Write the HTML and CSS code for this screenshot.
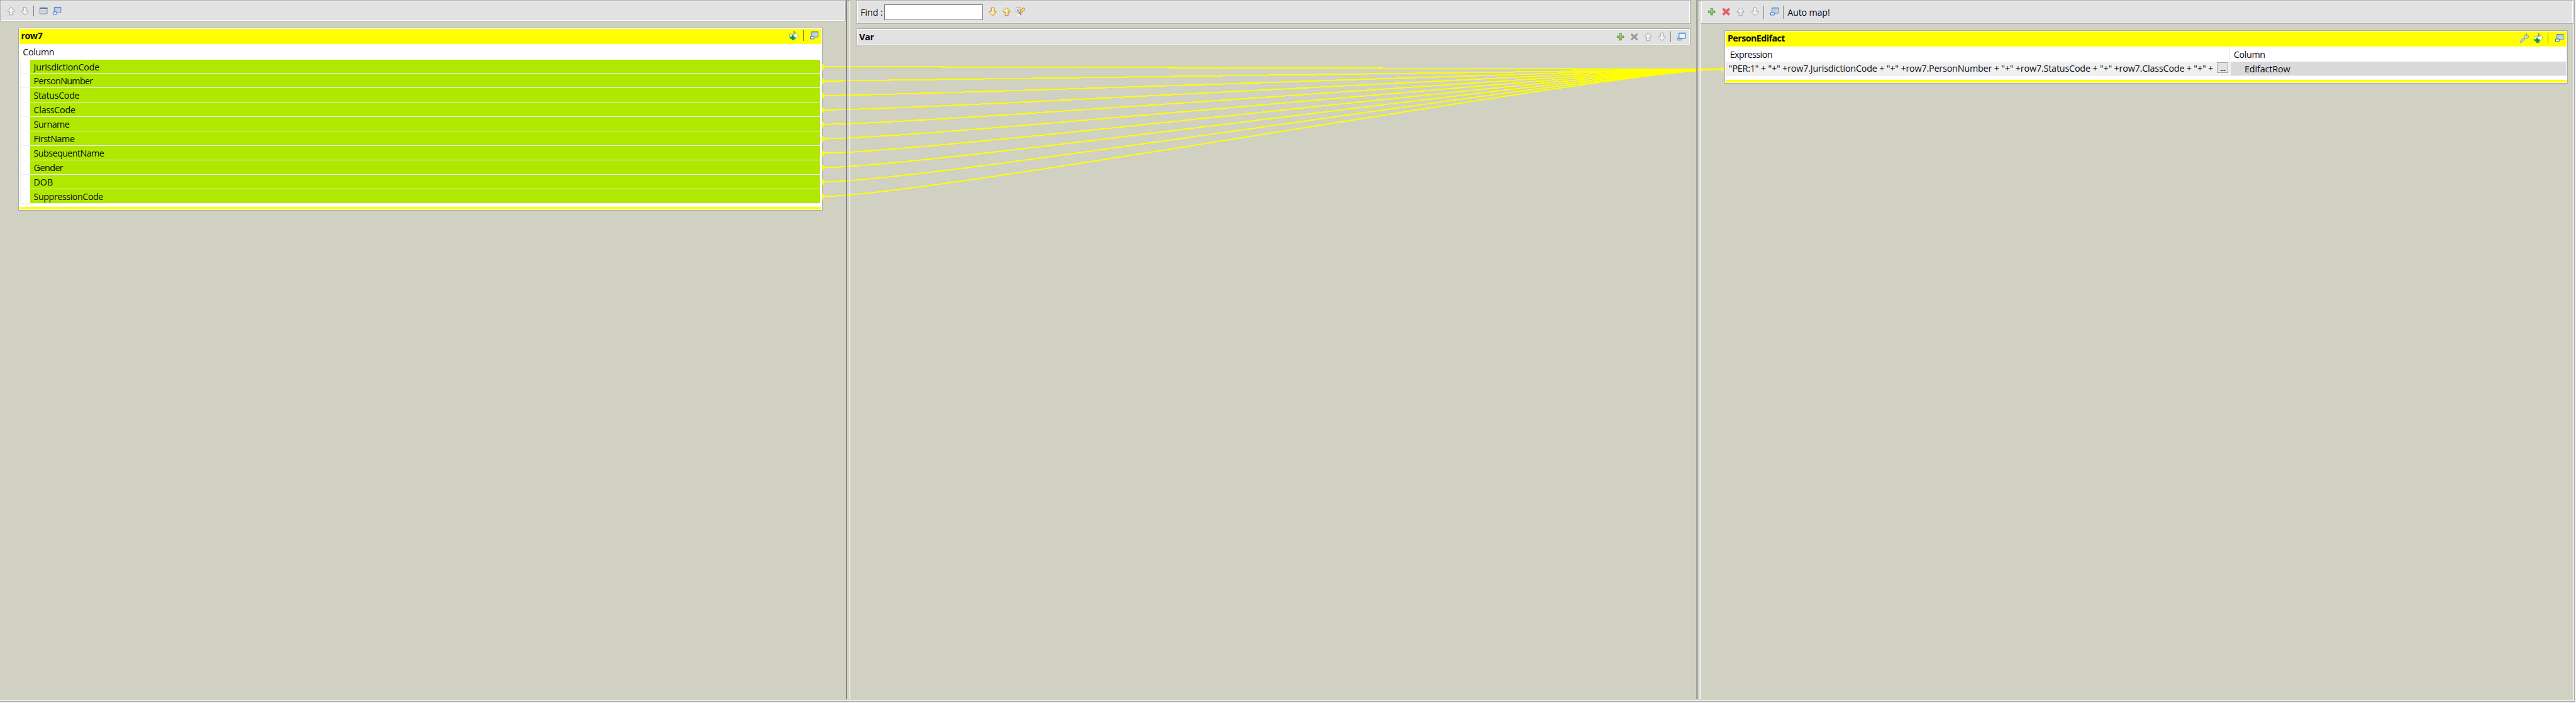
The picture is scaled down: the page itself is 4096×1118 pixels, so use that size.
FILE: index.html
```
<!DOCTYPE html>
<html lang="en">
<head>
<meta charset="utf-8">
<title>Map editor</title>
<link rel="stylesheet" href="styles.css">
</head>
<body>
<svg width="0" height="0" class="defs" aria-hidden="true">
  <defs>
    <linearGradient id="gold" x1="0" x2="1"><stop offset="0" stop-color="#fffbe0"/><stop offset="1" stop-color="#fbd97c"/></linearGradient>
    <linearGradient id="pane" x1="0" y1="0" x2="1" y2="1"><stop offset="0" stop-color="#b4c3d4"/><stop offset="1" stop-color="#d6dbdf"/></linearGradient>
    <linearGradient id="leaf" x1="0" y1="0" x2="0" y2="1"><stop offset="0" stop-color="#c3e06a"/><stop offset="1" stop-color="#7fb83c"/></linearGradient>
    <symbol id="up" viewBox="0 0 16 16"><path d="M8 1.500 13.500 7v1.500h-3v6h-5v-6h-3V7z"/></symbol>
    <symbol id="down" viewBox="0 0 16 16"><path d="M8 14.500 13.500 9V7.500h-3v-6h-5v6h-3V9z"/></symbol>
    <symbol id="table" viewBox="0 0 16 16"><path d="M1.500 2.500h12v10h-12z" fill="#fff" stroke="#66758f"/><path d="M1 2h13v2.500H1z" fill="#5d6f92"/><path d="M2 6.500h11M2 8.500h11M2 10.500h11" stroke="#a9b3c4"/><path d="M5.500 5v7" stroke="#c5ccd8"/></symbol>
    <symbol id="win" viewBox="0 0 16 16"><path d="M3.500 1.500h11v9h-11z" fill="url(#pane)" stroke="#4a86cc"/><path d="M4 2h10" stroke="#4a86cc"/><path d="M1.500 9.500h6v4h-6z" fill="#fff" stroke="#0a64d2"/></symbol>
    <symbol id="restore" viewBox="0 0 16 16"><path d="M1.500 9.500h6v4h-6z" fill="#b9c2cc" stroke="#8793a1"/><path d="M4 1.500h10.500v9H4z" fill="#e4f4ff" stroke="#0a5fc4"/><path d="M4 2h10" stroke="#0a5fc4"/></symbol>
    <symbol id="plus" viewBox="0 0 16 16"><path d="M6.500 2.500h3v4h4v3h-4v4h-3v-4h-4v-3h4z" fill="url(#leaf)" stroke="#3f8f4d"/></symbol>
    <symbol id="cross" viewBox="0 0 16 16"><path d="M4 2 8 5.700 12 2l2.200 2.200L10.600 8l3.600 3.800L12 14 8 10.300 4 14l-2.200-2.200L5.400 8 1.800 4.200z"/></symbol>
    <symbol id="insert" viewBox="0 0 18 16"><path d="M8 0h2v16H8z" fill="#858585"/><path d="M1.500 5.500h9V2l6 6-6 6v-3.500h-9z" fill="#fff" stroke="#a3a37a"/><path d="M5 7h3v3h3v3H8v3H5v-3H2v-3h3z" fill="#009a3c"/></symbol>
    <symbol id="wrench" viewBox="0 0 16 16"><path d="M1.500 12.500 7.500 7 9.500 9 4 15.200H2L1 14z" fill="#b5d3fa" stroke="#6f99d6"/><path d="M7.500 6.800 9 5.500V3l2.500-2h1.500l-1.500 2.200 1 1.500L15 4l.5 2-2 2.500h-2.800L9.500 9.300z" fill="#dcdcd4" stroke="#8b8a82"/></symbol>
    <symbol id="mark" viewBox="0 0 17 16"><path d="M1.500.5h7v9h-7z" fill="#f3f8ff" stroke="#b3a878"/><path d="M3 3.500h4M3 5.500h4M3 7.500h3" stroke="#5e82bd"/><path d="m8 7 4.500-5 2-.5 1.500 1.500v2L11 10z" fill="#f6b95b" stroke="#cf862b"/><path d="m7 8 4 4-2 2-3.500-3.500z" fill="#777a88"/><path d="M2 15.500 4 12l3-1 2 2-2 2.500z" fill="#fff4bd"/><circle cx="13" cy="4.500" r="1.200" fill="#fff"/></symbol>
  </defs>
</svg>

<main class="app">
  <section class="pane pane-in">
    <div class="bar bar-in">
      <svg class="ico dim"><use href="#up"/></svg>
      <svg class="ico dim i-b"><use href="#down"/></svg>
      <i class="sep s-in"></i>
      <svg class="ico i-t"><use href="#table"/></svg>
      <svg class="ico i-w"><use href="#win"/></svg>
    </div>
    <div class="table table-in">
      <header class="title"><b class="t-row">row7</b>
        <svg class="ico wide"><use href="#insert"/></svg><i class="sep"></i><svg class="ico last"><use href="#win"/></svg>
      </header>
      <div class="heads"><span class="head t-col">Column</span></div>
      <ul class="rows">
        <li><span class="r1">JurisdictionCode</span></li>
        <li><span class="r2">PersonNumber</span></li>
        <li><span class="r3">StatusCode</span></li>
        <li><span class="r4">ClassCode</span></li>
        <li><span class="r5">Surname</span></li>
        <li><span class="r6">FirstName</span></li>
        <li><span class="r7">SubsequentName</span></li>
        <li><span class="r8">Gender</span></li>
        <li><span class="r9">DOB</span></li>
        <li><span class="r10">SuppressionCode</span></li>
      </ul>
      <div class="foot"></div>
    </div>
  </section>

  <div class="sash"></div>

  <section class="pane pane-var">
    <div class="bar bar-find">
      <label for="find">Find :</label><input id="find" type="text">
      <svg class="ico gold"><use href="#down"/></svg>
      <svg class="ico gold"><use href="#up"/></svg>
      <svg class="ico wide2"><use href="#mark"/></svg>
    </div>
    <div class="bar bar-var">
      <b>Var</b>
      <svg class="ico"><use href="#plus"/></svg>
      <svg class="ico gray"><use href="#cross"/></svg>
      <svg class="ico dim"><use href="#up"/></svg>
      <svg class="ico dim"><use href="#down"/></svg>
      <i class="sep"></i>
      <svg class="ico v-w"><use href="#restore"/></svg>
    </div>
  </section>

  <div class="sash"></div>

  <section class="pane pane-out">
    <div class="bar bar-out">
      <svg class="ico"><use href="#plus"/></svg>
      <svg class="ico red"><use href="#cross"/></svg>
      <svg class="ico dim"><use href="#up"/></svg>
      <svg class="ico dim"><use href="#down"/></svg>
      <i class="sep"></i>
      <svg class="ico o-w"><use href="#win"/></svg>
      <i class="sep s-b"></i>
      <span class="auto">Auto map!</span>
    </div>
    <div class="table table-out">
      <header class="title"><b class="t-pe">PersonEdifact</b>
        <svg class="ico"><use href="#wrench"/></svg><svg class="ico wide o-i"><use href="#insert"/></svg><i class="sep"></i><svg class="ico last"><use href="#win"/></svg>
      </header>
      <div class="heads"><span class="head expr-head">Expression</span><span class="head out-head">Column</span></div>
      <div class="out-row">
        <div class="expr"><code>"PER:1" + "+" +row7.JurisdictionCode + "+" +row7.PersonNumber + "+" +row7.StatusCode + "+" +row7.ClassCode + "+" +</code><button>...</button></div>
        <div class="cell"><span>EdifactRow</span></div>
      </div>
      <div class="foot"></div>
    </div>
  </section>

  <svg class="links" viewBox="0 0 4290 1171">
    <g id="ends"></g>
  </svg>
</main>
<script src="links.js"></script>
</body>
</html>
```
FILE: styles.css
```
html, body { margin: 0; background: #f0f0f0; overflow: hidden; }
* { box-sizing: border-box; }
.defs { position: absolute; }

.app {
  zoom: 0.95478;
  position: relative;
  display: flex;
  width: 4288px;
  height: 1169px;
  background: #d1d1c3;
  border-right: 1px solid #a9abb0;
  border-bottom: 1px solid #a9abb0;
  box-shadow: inset -1px -1px #fff;
  font: 15px/20px "Open Sans", "Noto Sans", sans-serif;
  color: #0c0c14;
}

.pane { display: flex; flex-direction: column; flex: none; }
.pane-in { width: 1409px; }
.pane-var { width: 1409px; padding-left: 10px; }
.pane-out { width: 1454px; }

/* The sash edges stay above the link curves; the gap between them is clear. */
.sash {
  position: relative;
  z-index: 2;
  flex: none;
  width: 7px;
  height: 1165px;
  border-top: 1px solid #a0a0a0;
  background: linear-gradient(90deg, #a0a0a0 0 1px, #696969 1px 2px, transparent 2px 5px, #e3e3e3 5px 6px, #fff 6px);
}

.bar {
  display: flex;
  align-items: center;
  background: #e2e2e2;
  border: 1px solid #a9abb0;
  box-shadow: inset 0 0 0 1px #fff;
}
.ico { width: 16px; height: 16px; flex: none; overflow: visible; }
.wide { width: 18px; }
.wide2 { width: 17px; }
.dim { fill: #f1f1f1; stroke: #9b9b9b; }
.gold { fill: url(#gold); stroke: #b8791c; }
.gray { fill: #9a9a9a; }
.red { fill: #ee5a5f; stroke: #cf4a4c; stroke-width: .7; }
.sep { width: 1px; height: 18px; background: #828282; flex: none; }

.bar-in { height: 36px; width: 1409px; padding-left: 9px; }
.bar-in .i-b { margin-left: 7px; }
.bar-in .s-in { margin-left: 6px; }
.bar-in .i-t { margin-left: 9px; }
.bar-in .i-w { margin-left: 6px; }

.bar-find { height: 40px; width: 1389px; padding-left: 6px; }
.bar-find label { width: 40px; letter-spacing: -.1px; }
.bar-find input {
  width: 164px; height: 26px; padding: 0; margin-right: 8px;
  border: 1px solid #7a7a7a; background: #fff;
}
.bar-find .gold { margin-right: 7px; }

.bar-var { height: 28px; width: 1389px; margin-top: 7px; padding-left: 4px; }
.bar-var b { width: 1260px; letter-spacing: -.4px; }
.bar-var .ico + .ico { margin-left: 7px; }
.bar-var .sep { margin-left: 6px; }
.bar-var .v-w { margin-left: 9px; }

.bar-out { height: 40px; width: 1454px; padding-left: 10px; }
.bar-out .ico + .ico { margin-left: 8px; }
.bar-out .sep { height: 22px; margin-left: 6px; }
.bar-out .o-w { margin-left: 9px; }
.auto { margin-left: 7px; letter-spacing: -.2px; }

.table { background: #fff; border: 1px solid #a9abb0; padding: 1px; }
.table-in { width: 1340px; height: 305px; margin: 10px 0 0 30px; }
.table-out { width: 1404px; height: 89px; margin: 10px 0 0 40px; }

.title { display: flex; align-items: center; height: 25px; padding: 0 4px 2px 3px; background: #ff0; }
.title b { margin-right: auto; }
.t-row { letter-spacing: -.5px; }
.t-pe { letter-spacing: -.6px; }
.title .sep { margin-left: 6px; background: #8c8c14; }
.title .last { margin-left: 10px; }
.title .o-i { margin-left: 7px; }

.heads { display: flex; height: 26px; line-height: 27px; border-right: 1px solid #e4e4e4; letter-spacing: -.37px; }
.t-col { padding-left: 6px; }

.rows { list-style: none; margin: 0; padding: 0 2px 0 0; height: 240px; border-left: 1px solid #fff; }
.rows li { height: 24px; border-left: 1px solid #eee; border-bottom: 1px solid #eee; padding-left: 16px; }
.rows span { display: block; height: 23px; line-height: 25px; padding-left: 6px; background: #b0e800; }
.rows .r1 { letter-spacing: -.28px; }
.rows .r2 { letter-spacing: -.72px; }
.rows .r3 { letter-spacing: -.35px; }
.rows .r4 { letter-spacing: -.3px; }
.rows .r5 { letter-spacing: -.57px; }
.rows .r6 { letter-spacing: -.45px; }
.rows .r7 { letter-spacing: -.6px; }
.rows .r8 { letter-spacing: -.57px; }
.rows .r9 { letter-spacing: -.1px; }
.rows .r10 { letter-spacing: -.47px; }
.foot { height: 4px; margin-top: 6px; background: #ff0; }

.expr-head { width: 839px; padding-left: 7px; letter-spacing: -.58px; }
.out-head { border-left: 1px solid #e4e4e4; padding-left: 6px; }
.out-row { display: flex; height: 24px; background: #f0f0f0; border-left: 1px solid #ddd; border-right: 1px solid #ddd; }
.expr { display: flex; width: 840px; flex: none; padding-left: 4px; }
.expr code { font: inherit; letter-spacing: -.18px; line-height: 22px; width: 808px; overflow: hidden; white-space: nowrap; }
.expr button {
  width: 19px; height: 18px; margin: 1px 0 0 5px; padding: 0;
  font: inherit; letter-spacing: -1px; line-height: 16px; background: #e1e1e1; border: 1px solid #a4a4a4;
}
.cell { flex: 1; height: 23px; background: #d9d9d9; padding-left: 23px; line-height: 26px; letter-spacing: -.12px; }

.links { position: absolute; left: 0; top: 0; width: 4290px; height: 1171px; pointer-events: none; }
.links path { fill: none; stroke: #ff0; stroke-width: 2.12; shape-rendering: crispEdges; }
.links polygon { fill: #ff0; }
```
FILE: links.js
```
// One curve from every input row to the single output row.
const NS = 'http://www.w3.org/2000/svg';
const group = document.getElementById('ends');
const add = (name, attrs) => {
  const el = document.createElementNS(NS, name);
  for (const key in attrs) el.setAttribute(key, attrs[key]);
  group.appendChild(el);
};
for (let i = 0; i < 10; i++) {
  const y = 111 + i * 24;
  add('polygon', { points: `1369,${y - 5} 1374,${y} 1369,${y + 6}` });
  add('path', { d: `M1372 ${y}C1544 ${y} 2697 115 2868 115.500` });
}
add('polygon', { points: '2867,110 2872,115.500 2867,121' });

```
